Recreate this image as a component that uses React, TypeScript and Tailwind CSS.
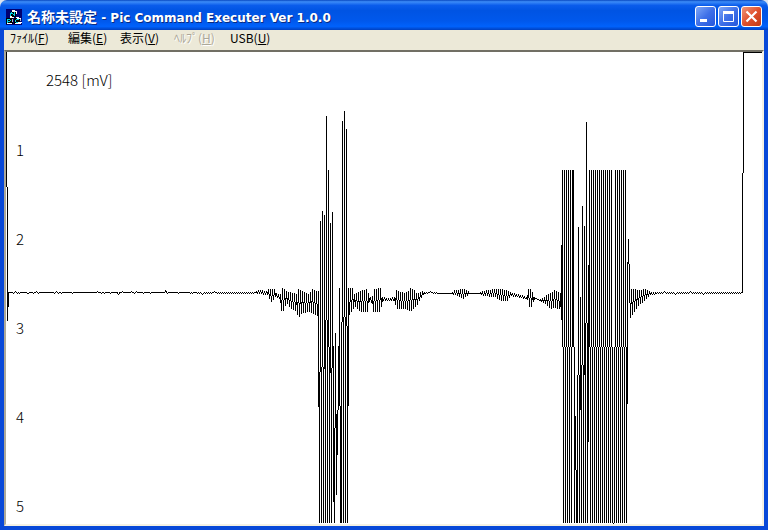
import type { ReactNode } from "react";

const PLOT_LEFT = 6;
const PLOT_TOP = 52;
const PLOT_WIDTH = 756;
const PLOT_HEIGHT = 472;
const FLOOR = 523;
const PEAK = 170;

// [x, upper edge, lower edge], the signal swings between the two edges
const envelope: [number, number, number][] = [
  [8, 292, 292],
  [194, 292, 292],
  [198, 292, 293],
  [254, 292, 293],
  [258, 290, 294],
  [267, 291, 295],
  [268, 289, 298],
  [271, 289, 302],
  [274, 289, 299],
  [275, 293, 297],
  [280, 294, 299],
  [281, 288, 311],
  [283, 288, 311],
  [286, 291, 303],
  [290, 292, 308],
  [296, 294, 312],
  [298, 289, 318],
  [302, 291, 313],
  [308, 294, 312],
  [312, 289, 313],
  [317, 292, 316],
  [349, 288, 315],
  [352, 288, 311],
  [354, 294, 306],
  [360, 291, 312],
  [367, 289, 312],
  [369, 297, 302],
  [372, 296, 303],
  [373, 289, 312],
  [380, 288, 312],
  [382, 297, 301],
  [388, 298, 301],
  [394, 297, 301],
  [396, 290, 309],
  [404, 293, 309],
  [408, 291, 310],
  [410, 288, 312],
  [413, 289, 309],
  [417, 294, 305],
  [422, 291, 296],
  [425, 292, 293],
  [450, 293, 293],
  [454, 290, 295],
  [463, 289, 299],
  [468, 291, 295],
  [470, 293, 293],
  [478, 293, 293],
  [482, 291, 296],
  [495, 289, 297],
  [500, 289, 301],
  [507, 290, 301],
  [510, 292, 296],
  [521, 295, 298],
  [527, 297, 300],
  [528, 289, 307],
  [531, 289, 307],
  [534, 297, 299],
  [539, 299, 301],
  [545, 296, 304],
  [550, 293, 309],
  [554, 290, 308],
  [560, 293, 309],
  [630, 289, 318],
  [634, 289, 312],
  [638, 290, 306],
  [645, 289, 300],
  [650, 292, 295],
  [660, 292, 294],
  [668, 292, 293],
  [742, 292, 293],
];

const firstBurst = [
  291, FLOOR, 221, FLOOR, 211, FLOOR, 215, FLOOR, 116, FLOOR, 170, FLOOR, 223,
  FLOOR, 212, 480, FLOOR, 333, 495, 415, 404, 288, FLOOR, FLOOR, 121, FLOOR,
  111, FLOOR, 129, FLOOR, 288,
];

const secondBurst = [
  320, PEAK, FLOOR, PEAK, FLOOR, PEAK, FLOOR, PEAK, FLOOR, PEAK, FLOOR, PEAK,
  PEAK, FLOOR, 416, FLOOR, FLOOR, 227, FLOOR, 297, FLOOR, 206, FLOOR, 226,
  FLOOR, 122, FLOOR, 360, PEAK, FLOOR, PEAK, FLOOR, PEAK, FLOOR, PEAK, FLOOR,
  PEAK, FLOOR, PEAK, FLOOR, PEAK, FLOOR, PEAK, FLOOR, PEAK, FLOOR, PEAK, FLOOR,
  PEAK, FLOOR, PEAK, FLOOR, FLOOR, FLOOR, PEAK, FLOOR, PEAK, FLOOR, PEAK,
  FLOOR, PEAK, FLOOR, PEAK, FLOOR, PEAK, FLOOR, 285, 239, 288,
];

const noise: Record<number, number> = {
  13: 293, 15: 291, 17: 293, 19: 293, 27: 293, 28: 293, 33: 293, 36: 291,
  38: 293, 54: 293, 56: 291, 58: 293, 61: 293, 72: 293, 97: 291, 101: 293,
  104: 293, 110: 293, 118: 295, 122: 291, 131: 291, 132: 293, 134: 293,
  136: 291, 143: 293, 150: 293, 164: 293, 165: 290, 167: 293, 178: 293,
  190: 293, 192: 293, 202: 294, 214: 291, 430: 291, 437: 294, 664: 291,
  675: 294, 690: 291, 703: 294,
};

const sampleAt = (x: number) => {
  if (x === 6) return 52;
  if (x === 7) return 321;
  if (x > 742) return 52;
  if (noise[x]) return noise[x];
  if (x >= 318 && x < 318 + firstBurst.length) return firstBurst[x - 318];
  if (x >= 561 && x < 561 + secondBurst.length) return secondBurst[x - 561];

  const next = Math.max(1, envelope.findIndex((key) => key[0] >= x));
  const [x0, top0, bottom0] = envelope[next - 1];
  const [x1, top1, bottom1] = envelope[next];
  const t = (x - x0) / (x1 - x0);
  const upper = x > 600 ? x % 2 === 1 : x % 2 === 0;
  return Math.round(
    upper ? top0 + (top1 - top0) * t : bottom0 + (bottom1 - bottom0) * t
  );
};

// one vertical run of pixels per column, neighbours meet half way
const buildTrace = () => {
  let d = "";
  for (let x = PLOT_LEFT; x < PLOT_LEFT + PLOT_WIDTH; x++) {
    const y = sampleAt(x);
    const before = x === PLOT_LEFT ? y : Math.round((sampleAt(x - 1) + y) / 2);
    const after = Math.round((y + sampleAt(x + 1)) / 2);
    const top = Math.min(y, before, after);
    const bottom = Math.max(y, before, after, top + 1);
    d += `M${x} ${top}h1V${bottom}h-1z`;
  }
  return d;
};

const trace = buildTrace();

const menus = [
  { label: "ﾌｧｲﾙ", accel: "F", width: "w-[58px]" },
  { label: "編集", accel: "E", width: "w-[52px]" },
  { label: "表示", accel: "V", width: "w-[54px]" },
  { label: "ﾍﾙﾌﾟ", accel: "H", width: "w-[56px]", disabled: true },
  { label: "USB", accel: "U", width: "w-[52px]" },
];

const AppIcon = () => (
  <svg width="16" height="16" viewBox="0 0 16 16" shapeRendering="crispEdges">
    <path fill="#000070" d="M0 0h16v16H0z" />
    <path fill="#000" d="M5 2h5v6H5zM0 9h7v6H0zM8 9h6v6H8z" />
    <path
      fill="#fff"
      d="M6 1h3v1h2v1H6zM10 3h1v2h-1zM4 7h2v1h2v1H4zM10 8h3v1h2v1h-4zM1 14h5v1H1zM9 14h6v1H9zM12 13h4v1h-4z"
    />
    <path
      fill="#00d8e8"
      d="M4 4h1v3H4zM5 3h1v2H5zM6 4h1v1H6zM7 5h1v1H7zM8 3h1v4H8zM1 10h1v4H1zM2 10h2v1H2zM2 12h2v1H2zM4 11h1v1H4zM10 10h3v1h-3zM9 11h1v2H9zM10 13h2v1h-2z"
    />
    <path fill="#b8c0c8" d="M6 10h1v3H6zM14 10h1v2h-1z" />
  </svg>
);

interface CaptionButtonProps {
  label: string;
  close?: boolean;
  children: ReactNode;
}

const CaptionButton = ({ label, close = false, children }: CaptionButtonProps) => (
  <button
    type="button"
    aria-label={label}
    className={`flex size-[21px] items-center justify-center rounded-[3px] border border-white bg-gradient-to-br ${
      close
        ? "from-[#ee9478] via-[#e0502c] to-[#c03a14]"
        : "from-[#7fa6f6] via-[#3f70e8] to-[#2456dc]"
    }`}
  >
    <svg width="19" height="19" viewBox="0 0 19 19" fill="none" stroke="#fff">
      {children}
    </svg>
  </button>
);

const TitleBar = () => (
  <header className="flex h-[30px] items-center rounded-t-[7px] bg-linear-[180deg,#0848c0_0%,#3c8cf8_6%,#0a5ceb_18%,#0054e3_35%,#0058ec_70%,#0062fc_88%,#0040c0_100%] px-[6px] pt-[3px]">
    <AppIcon />
    <h1 className="ml-[5px] flex flex-1 items-baseline truncate leading-5 font-bold text-white [text-shadow:1px_1px_#0a2a80]">
      <span className="text-[14px]">名称未設定</span>
      <span className="font-['DejaVu_Sans',sans-serif] text-[12px] whitespace-pre">
        {" - Pic Command Executer Ver 1.0.0"}
      </span>
    </h1>
    <div className="flex gap-[2px]">
      <CaptionButton label="最小化">
        <path strokeWidth="3" d="M4 13.5h7" />
      </CaptionButton>
      <CaptionButton label="最大化">
        <path d="M4.5 5v9.5h10V5" />
        <path strokeWidth="3" d="M4 5.5h11" />
      </CaptionButton>
      <CaptionButton label="閉じる" close>
        <path strokeWidth="2.2" d="M4.5 4.5l10 10M14.5 4.5l-10 10" />
      </CaptionButton>
    </div>
  </header>
);

const MenuBar = () => (
  <nav className="flex h-5 items-start bg-[#ece9d8] pl-[6px] text-xs leading-4">
    {menus.map((menu) => (
      <button
        key={menu.label}
        type="button"
        disabled={menu.disabled}
        className={`${menu.width} text-left whitespace-nowrap text-black disabled:text-[#aca899] disabled:[text-shadow:1px_1px_#fff]`}
      >
        {menu.label}(<span className="underline">{menu.accel}</span>)
      </button>
    ))}
  </nav>
);

const Plot = () => (
  <main className="relative flex-1 overflow-hidden border-2 border-t-[#716f64] border-r-[#f4f1e4] border-b-[#f4f1e4] border-l-[#aca899] bg-white">
    <svg
      className="block"
      width={PLOT_WIDTH}
      height={PLOT_HEIGHT}
      viewBox={`${PLOT_LEFT} ${PLOT_TOP} ${PLOT_WIDTH} ${PLOT_HEIGHT}`}
      shapeRendering="crispEdges"
    >
      <path d={trace} fill="#000" />
    </svg>
    <div className="absolute inset-0 text-[15px] leading-5 font-light text-black">
      <p className="h-[53px] pt-[18px] pl-10">2548 [mV]</p>
      <ol className="pl-[10px]">
        {[1, 2, 3, 4, 5].map((volt) => (
          <li key={volt} className="flex h-[89px] items-center">
            {volt}
          </li>
        ))}
      </ol>
    </div>
  </main>
);

const App = () => (
  <div className="flex min-h-screen flex-col bg-[#dce4f0] font-['Noto_Sans_CJK_JP',sans-serif]">
    <TitleBar />
    <div className="flex flex-1 flex-col border-x-4 border-b-4 border-[#0848d8]">
      <MenuBar />
      <Plot />
    </div>
  </div>
);

export default App;
